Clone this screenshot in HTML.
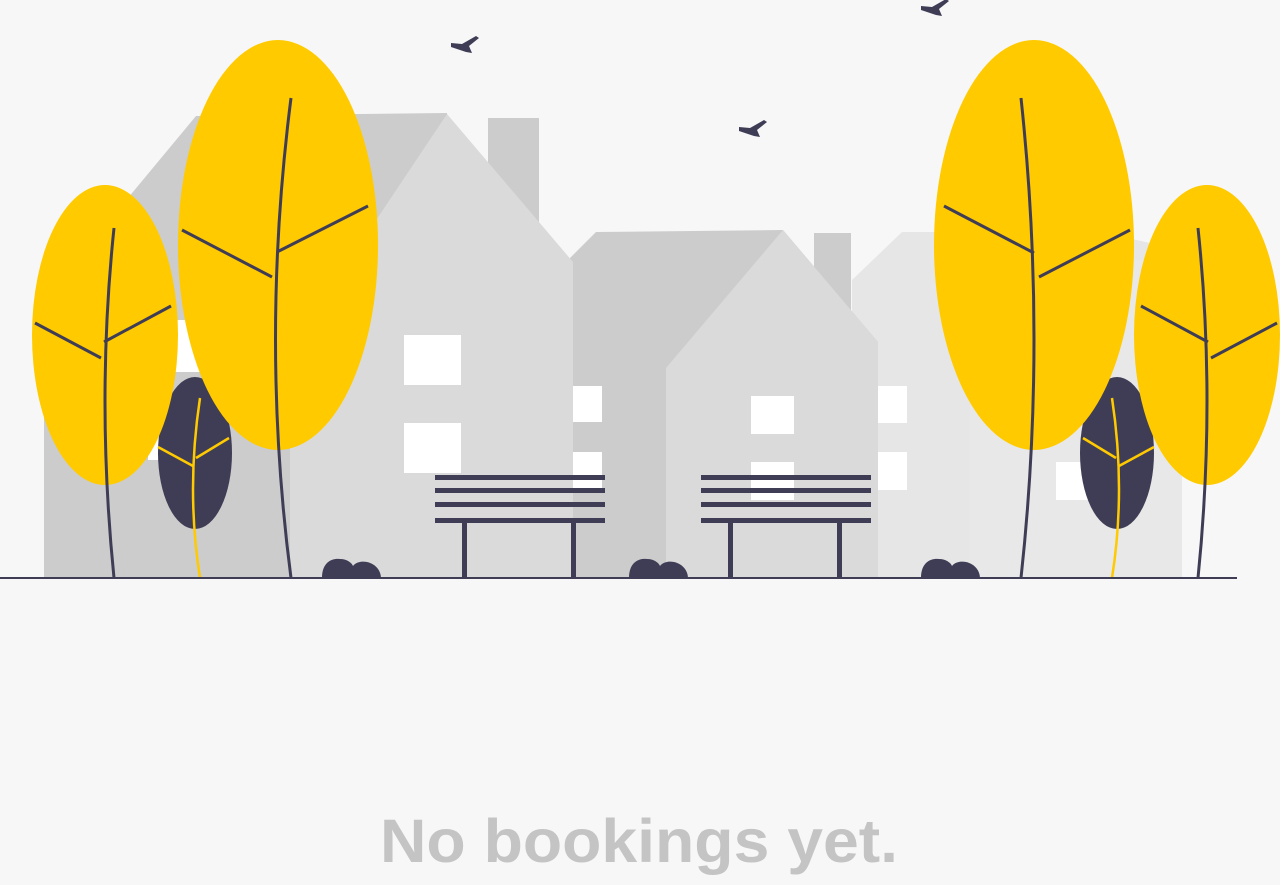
<!DOCTYPE html>
<html><head><meta charset="utf-8"><style>
html,body{margin:0;padding:0;background:#f7f7f7;width:1280px;height:885px;overflow:hidden}
svg{display:block}
</style></head><body>
<svg width="1280" height="885" viewBox="0 0 1280 885" xmlns="http://www.w3.org/2000/svg">
<rect width="1280" height="885" fill="#f7f7f7"/>
<polygon points="852,578 852,280 902,232 1000,232 1100,232 1182,250 1182,578" fill="#e6e6e6"/>
<rect x="970" y="260" width="212" height="318" fill="#e8e8e8"/>
<rect x="878" y="386" width="29" height="37" fill="#fff"/>
<rect x="878" y="452" width="29" height="38" fill="#fff"/>
<rect x="1056" y="462" width="32" height="38" fill="#fff"/>
<rect x="814" y="233" width="37" height="90" fill="#cccccc"/>
<polygon points="570,578 570,258 596,232 783,230 878,342 878,578" fill="#cccccc"/>
<rect x="573" y="386" width="29" height="36" fill="#fff"/>
<rect x="573" y="452" width="29" height="36" fill="#fff"/>
<polygon points="666,578 666,368 783,230 878,342 878,578" fill="#dadada"/>
<rect x="751" y="396" width="43" height="38" fill="#fff"/>
<rect x="751" y="462" width="43" height="38" fill="#fff"/>
<rect x="488" y="118" width="51" height="110" fill="#cccccc"/>
<polygon points="44,578 44,299 196,116 447,113 447,578" fill="#cccccc"/>
<rect x="150" y="320" width="50" height="52" fill="#fff"/>
<rect x="148" y="420" width="50" height="40" fill="#fff"/>
<polygon points="290,578 290,349 447,114 573,262 573,578" fill="#dadada"/>
<rect x="404" y="335" width="57" height="50" fill="#fff"/>
<rect x="404" y="423" width="57" height="50" fill="#fff"/>
<ellipse cx="195" cy="453" rx="37" ry="76" fill="#3f3d56"/>
<ellipse cx="1117" cy="453" rx="37" ry="76" fill="#3f3d56"/>
<ellipse cx="105" cy="335" rx="73" ry="150" fill="#ffca00"/>
<ellipse cx="278" cy="245" rx="100" ry="205" fill="#ffca00"/>
<ellipse cx="1034" cy="245" rx="100" ry="205" fill="#ffca00"/>
<ellipse cx="1207" cy="335" rx="73" ry="150" fill="#ffca00"/>
<g fill="none" stroke="#3f3d56" stroke-width="3">
<path d="M114,228 Q96,400 114,578"/>
<path d="M35,323 L101,358 M104,342 L171,306"/>
<path d="M291,98 Q260,340 291,578"/>
<path d="M182,230 L272,277 M277,252 L368,206"/>
<path d="M1021,98 Q1047,340 1021,578"/>
<path d="M944,206 L1034,253 M1039,277 L1130,230"/>
<path d="M1198,228 Q1216,400 1198,578"/>
<path d="M1141,306 L1208,342 M1211,358 L1277,323"/>
</g>
<g fill="none" stroke="#ffca00" stroke-width="2.5">
<path d="M200,398 Q186,490 200,578"/>
<path d="M158,447 L193,466 M196,458 L229,438"/>
<path d="M1112,398 Q1126,490 1112,578"/>
<path d="M1083,438 L1116,458 M1119,466 L1154,447"/>
</g>
<g fill="#3f3d56">
<rect x="435" y="475" width="170" height="5"/>
<rect x="435" y="488" width="170" height="5"/>
<rect x="435" y="502" width="170" height="5"/>
<rect x="435" y="518" width="170" height="5"/>
<rect x="462" y="522" width="5" height="56"/>
<rect x="571" y="522" width="5" height="56"/>
<rect x="701" y="475" width="170" height="5"/>
<rect x="701" y="488" width="170" height="5"/>
<rect x="701" y="502" width="170" height="5"/>
<rect x="701" y="518" width="170" height="5"/>
<rect x="728" y="522" width="5" height="56"/>
<rect x="837" y="522" width="5" height="56"/>
<path d="M322,578 C322,562 332,558 340,559 C347,559 352,563 353,566 C356,562 362,561 367,562 C376,564 381,571 381,578 Z"/>
<path d="M629,578 C629,562 639,558 647,559 C654,559 659,563 660,566 C663,562 669,561 674,562 C683,564 688,571 688,578 Z"/>
<path d="M921,578 C921,562 931,558 939,559 C946,559 951,563 952,566 C955,562 961,561 966,562 C975,564 980,571 980,578 Z"/>
<path d="M451,43 L462,44 L476,36 L479,38 L469,46 L472,53 L466,52 L451,47 Z"/>
<path d="M739,127 L750,128 L764,120 L767,122 L757,130 L760,137 L754,136 L739,131 Z"/>
<path d="M921,6 L932,7 L946,-1 L949,1 L939,9 L942,16 L936,15 L921,10 Z"/>
</g>
<rect x="0" y="577" width="1237" height="2" fill="#3f3d56"/>
<text x="380" y="862" textLength="518" lengthAdjust="spacingAndGlyphs" font-family="Liberation Sans, sans-serif" font-weight="bold" font-size="61" fill="#c4c4c4">No bookings yet.</text>
</svg>
</body></html>
